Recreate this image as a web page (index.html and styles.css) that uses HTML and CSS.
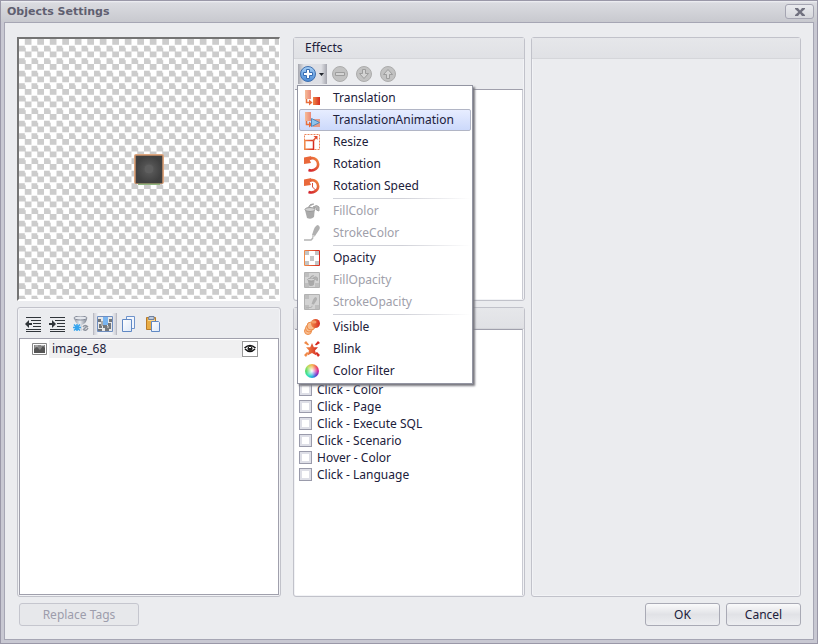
FILE: index.html
```html
<!DOCTYPE html>
<html lang="en">
<head>
<meta charset="utf-8">
<title>Objects Settings</title>
<link rel="stylesheet" href="styles.css">
</head>
<body>
<svg width="0" height="0" class="defs" aria-hidden="true">
  <defs>
    <linearGradient id="hot" x1="0" x2="1" y1="0" y2="0"><stop offset="0" stop-color="#f08a48"/><stop offset="1" stop-color="#d62a20"/></linearGradient>
    <linearGradient id="pale" x1="0" x2="1" y1="0" y2="0"><stop offset="0" stop-color="#f6bc98"/><stop offset="1" stop-color="#ea8878"/></linearGradient>
    <linearGradient id="spin" x1="0" x2="1" y1="1" y2="0"><stop offset="0" stop-color="#d2202c"/><stop offset="1" stop-color="#f28a40"/></linearGradient>
    <linearGradient id="blue" x1="0" x2="0" y1="0" y2="1"><stop offset="0" stop-color="#a8d0f6"/><stop offset="1" stop-color="#4a8ad6"/></linearGradient>
    <linearGradient id="page" x1="0" x2="1" y1="0" y2="1"><stop offset="0" stop-color="#fff"/><stop offset="1" stop-color="#dce8f8"/></linearGradient>
    <linearGradient id="steel" x1="0" x2="1" y1="0" y2="0"><stop offset="0" stop-color="#8d93a0"/><stop offset=".45" stop-color="#e8ebf0"/><stop offset="1" stop-color="#7c8390"/></linearGradient>
    <g id="move">
      <path d="M1 0h6v9H1z" fill="url(#pale)"/>
      <path d="M2.500 9v3.500H6" fill="none" stroke="#e8703c" stroke-width="1.500"/>
      <path d="M5 9.500l3.500 3-3.500 3z" fill="#e8683a"/>
    </g>
    <g id="turn">
      <path d="M5 3.200Q9 .8 12.200 3.700 15.500 7.500 13.200 11.500 10 15.600 4.500 14" fill="none" stroke="url(#spin)" stroke-width="2.600"/>
      <path d="M0 1.500L7.500 0 5.500 3.500 7 7 0 8z" fill="#e9683a"/>
    </g>
    <g id="bucket">
      <path d="M1 7l10-2-1 9q-3 3-7 1z" fill="#a9a9a9"/>
      <ellipse cx="6" cy="6.500" rx="5" ry="2" fill="#d2d2d2" stroke="#999"/>
      <path d="M4 5q2-5 6-4M9 4q4-3 6 0v4q-3 0-3-3z" fill="#b4b4b4" stroke="#a4a4a4"/>
    </g>
    <g id="pen">
      <path d="M14 0q3 2 1 5l-4 6-3-1 2-6q2-4 4-4z" fill="#b0b0b0"/>
      <path d="M8 10l3 1-3 3z" fill="#ccc"/><path d="M0 15h7l2-2" fill="none" stroke="#b4b4b4" stroke-width="1.500"/>
    </g>
  </defs>
</svg>
<div class="window">
  <header class="titlebar">
    <h1>Objects Settings</h1>
    <button class="close" aria-label="Close"><svg width="10" height="8" viewBox="0 0 10 8"><path d="M0 0h3l2 2.500L7 0h3v1L6.700 4 10 7v1H7L5 5.500 3 8H0V7l3.300-3L0 1z" fill="#71717f"/></svg></button>
  </header>
  <main class="content">
    <div class="columns">
      <div class="column">
        <div class="canvas">
          <svg width="30" height="31" viewBox="0 0 30 31">
            <defs><radialGradient id="tile"><stop offset="0" stop-color="#606060"/><stop offset="1" stop-color="#404040"/></radialGradient></defs>
            <rect width="30" height="30" rx="2" fill="#dda57d"/><path d="M4 30h22" stroke="#8fb57e" stroke-width="2"/>
            <rect x="1.500" y="1.500" width="27" height="28" fill="#7b5c49"/>
            <rect x="2" y="2" width="26" height="27" fill="url(#tile)"/><circle cx="15" cy="15" r="5" fill="#5f5f5f" stroke="#555"/>
          </svg>
        </div>
        <section class="panel grow">
          <div class="toolbar objects">
            <button aria-label="Outdent"><svg width="16" height="16" viewBox="0 0 16 16"><path d="M1 1.500h15M6 4.500h10M8 7.500h8M8 10.500h8M1 13.500h15M1 15.500h15" stroke="#30353a"/><path d="M0 8l4-4v3h3v2H4v3z" fill="#30353a"/></svg></button>
            <button aria-label="Indent"><svg width="16" height="16" viewBox="0 0 16 16"><path d="M1 1.500h15M6 4.500h10M8 7.500h8M8 10.500h8M1 13.500h15M1 15.500h15" stroke="#30353a"/><path d="M7 8L3 4v3H0v2h3v3z" fill="#30353a"/></svg></button>
            <button aria-label="Filter"><svg width="16" height="16" viewBox="0 0 16 16"><path d="M1 2q1 5 5 7v5l3 1V9q5-2 5-7z" fill="url(#steel)"/><ellipse cx="7.500" cy="2" rx="6.500" ry="2" fill="#e4e7ed" stroke="#858b98"/><path d="M4 8v7M0 11.500h8M1 8.500l6 6M7 8.500l-6 6" stroke="#35a4ee" stroke-width="1.500"/><path d="M10 14l4-4M10 11q2-3 5 0M15 12q-2 4-5 1" fill="none" stroke="#8f949e" stroke-width="1.500"/></svg></button>
            <button class="pressed" aria-label="Show background" aria-pressed="true"><svg width="16" height="16" viewBox="0 0 16 16"><path d="M.5.5h15v15H.5z" fill="#e8e8e8" stroke="#6f8ec0"/><path d="M1 3h3v3H1zM12 3h3v3h-3zM2 8h3v4H2zM6 9h4v3H6zM11 7h3v6h-3zM1 13h4v2H1zM8 12h4v3H8z" fill="#73777c"/><path d="M4 5h2v5H4zM10 10h2v2h-2z" fill="#aaa"/><path d="M6 1h5v8H6z" fill="#79b4f0"/></svg></button>
            <button aria-label="Copy"><svg width="16" height="16" viewBox="0 0 16 16"><path d="M5.500.5h8v12h-8z" fill="#f2f6fd" stroke="#6e93cb"/><path d="M1.500 3.500h9v12h-9z" fill="url(#page)" stroke="#6088c4"/></svg></button>
            <button aria-label="Paste"><svg width="16" height="16" viewBox="0 0 16 16"><path d="M1.500 1.500h9v12h-9z" fill="#e9ad45" stroke="#ba7b28"/><path d="M3 3h7v2H3z" fill="#f6d895"/><path d="M4 .5h5v3H3.500z" fill="#bdcbe0" stroke="#70819d"/><path d="M6.500 5.500h7l1 1v9h-8z" fill="url(#page)" stroke="#6088c4"/></svg></button>
          </div>
          <div class="list bordered">
            <div class="object-row">
              <svg width="15" height="12" viewBox="0 0 15 12"><path d="M.5.500h14v11H.5z" fill="#fff" stroke="#888"/><path d="M2 2h11v8H2z" fill="#878787"/><path d="M2 6l3-2 3 3 3-4 2 2v5H2z" fill="#555"/><path d="M3 3h3M9 2.500h3" stroke="#bcbcbc"/></svg>
              <span class="object-name">image_68</span>
              <button class="eye" aria-label="Toggle visibility"><svg width="12" height="9" viewBox="0 0 12 9"><path d="M.5 4Q6-1 11.500 4M1 5q5 5 10 0" fill="none" stroke="#111" stroke-width="1.500"/><circle cx="6" cy="4.500" r="2.500" fill="#222"/><path d="M5 3.500h2" stroke="#fff"/></svg></button>
            </div>
          </div>
        </section>
      </div>
      <div class="column middle">
        <section class="panel effects">
          <h2>Effects</h2>
          <div class="toolbar">
            <button class="add" aria-label="Add effect" aria-haspopup="menu" aria-expanded="true"><svg width="26" height="18" viewBox="0 0 26 18"><circle cx="9" cy="9" r="7.500" fill="url(#blue)" stroke="#4170ad"/><path d="M7.500 4.500h3v3h3v3h-3v3h-3v-3h-3v-3h3z" fill="#fff" stroke="#376cb0"/><path d="M20 8h5l-2.500 3z" fill="#20242c"/></svg></button>
            <button disabled aria-label="Remove effect"><svg width="16" height="16" viewBox="0 0 16 16"><circle cx="8" cy="8" r="7.500" fill="#c2c2c2" stroke="#acacac"/><path d="M3.500 6.500h9v3h-9z" fill="#d4d4d4" stroke="#9d9d9d"/></svg></button>
            <button disabled aria-label="Move down"><svg width="16" height="16" viewBox="0 0 16 16"><circle cx="8" cy="8" r="7.500" fill="#c2c2c2" stroke="#acacac"/><path d="M6.500 3.500h3v4h3L8 12.500 3.500 7.500h3z" fill="#d4d4d4" stroke="#9d9d9d"/></svg></button>
            <button disabled aria-label="Move up"><svg width="16" height="16" viewBox="0 0 16 16"><circle cx="8" cy="8" r="7.500" fill="#c2c2c2" stroke="#acacac"/><path d="M6.500 12.500h3v-4h3L8 3.500 3.500 8.500h3z" fill="#d4d4d4" stroke="#9d9d9d"/></svg></button>
          </div>
          <div class="list"></div>
          <div class="menu" role="menu">
            <button role="menuitem"><svg width="16" height="16" viewBox="0 0 16 16"><use href="#move"/><path d="M9 7h7v8H9z" fill="url(#hot)"/></svg>Translation</button>
            <button role="menuitem" class="active"><svg width="16" height="16" viewBox="0 0 16 16"><use href="#move"/><path d="M9 7h7v8H9z" fill="#e69a86"/><path d="M7.500 6.500l8 4-8 4z" fill="#8fc4ec" stroke="#4f88bd"/></svg>TranslationAnimation</button>
            <button role="menuitem"><svg width="16" height="16" viewBox="0 0 16 16"><path d="M.5.500h15v15H.5z" fill="none" stroke="#eb8358" stroke-dasharray="2 1"/><path d="M.8 6.500h8.700v8.700H.8z" fill="#fff" stroke="url(#hot)" stroke-width="1.500"/><path d="M9 7l3-3.500" stroke="#e25a34" stroke-width="1.500"/><path d="M9.500 2h4v4z" fill="#e0482e"/></svg>Resize</button>
            <button role="menuitem"><svg width="16" height="16" viewBox="0 0 16 16"><use href="#turn"/></svg>Rotation</button>
            <button role="menuitem"><svg width="16" height="16" viewBox="0 0 16 16"><use href="#turn"/><path d="M8.500 5v4l3 3" fill="none" stroke="#d85040"/></svg>Rotation Speed</button>
            <hr>
            <button role="menuitem" disabled><svg width="16" height="16" viewBox="0 0 16 16"><use href="#bucket"/></svg>FillColor</button>
            <button role="menuitem" disabled><svg width="16" height="16" viewBox="0 0 16 16"><use href="#pen"/></svg>StrokeColor</button>
            <hr>
            <button role="menuitem"><svg width="16" height="16" viewBox="0 0 16 16"><path d="M.5.500h15v15H.5z" fill="#fff" stroke="url(#hot)"/><path d="M1 1h4v4H1zM11 1h4v4h-4zM6 6h4v5H6zM1 11h4v4H1zM11 11h4v4h-4z" fill="#c4c4c4"/></svg>Opacity</button>
            <button role="menuitem" disabled><svg width="16" height="16" viewBox="0 0 16 16"><path d="M.5.500h15v15H.5z" fill="#d3d3d3" stroke="#b2b2b2"/><path d="M1 1h4v4H1zM11 11h4v4h-4zM1 11h4v4H1z" fill="#bebebe"/><use href="#bucket" transform="translate(3 3) scale(.7)"/></svg>FillOpacity</button>
            <button role="menuitem" disabled><svg width="16" height="16" viewBox="0 0 16 16"><path d="M.5.500h15v15H.5z" fill="#d3d3d3" stroke="#b2b2b2"/><path d="M1 1h4v4H1zM11 11h4v4h-4zM1 11h4v4H1z" fill="#bebebe"/><use href="#pen" transform="translate(2 3) scale(.7)"/></svg>StrokeOpacity</button>
            <hr>
            <button role="menuitem"><svg width="16" height="16" viewBox="0 0 16 16"><g fill="#f8bd90" stroke="#ed8e4b"><circle cx="4" cy="12" r="3.500"/><circle cx="5" cy="9.500" r="3.500"/><circle cx="7" cy="7" r="4"/></g><circle cx="11.500" cy="4.500" r="4.500" fill="url(#hot)"/><ellipse cx="10" cy="3" rx="2.500" ry="1.500" fill="#f59b66"/></svg>Visible</button>
            <button role="menuitem"><svg width="16" height="16" viewBox="0 0 16 16"><path d="M8 2l1.800 4.200H14l-3 3.300 1.500 5L8 12l-4.500 2.500 1.500-5-3-3.300h4.200z" fill="url(#hot)"/><path d="M0 2l2-2 3 3.500L4 4.500zM0 14l3-3 1.500 1-2.500 4z" fill="#f08a48"/><path d="M14 0l2 2-4 2.500-1-1zM14 16l2-2-3-3-1.500 1z" fill="#d62a20"/></svg>Blink</button>
            <button role="menuitem"><span class="wheel"></span>Color Filter</button>
          </div>
        </section>
        <section class="panel grow">
          <h2></h2>
          <div class="list events">
            <label><input type="checkbox">Click - Color</label>
            <label><input type="checkbox">Click - Page</label>
            <label><input type="checkbox">Click - Execute SQL</label>
            <label><input type="checkbox">Click - Scenario</label>
            <label><input type="checkbox">Hover - Color</label>
            <label><input type="checkbox">Click - Language</label>
          </div>
        </section>
      </div>
      <section class="panel properties"><h2></h2></section>
    </div>
    <footer>
      <button class="btn wide" disabled>Replace Tags</button>
      <button class="btn">OK</button>
      <button class="btn">Cancel</button>
    </footer>
  </main>
</div>
</body>
</html>
```
FILE: styles.css
```css
* { box-sizing: border-box; }
body { margin: 0; font: 12px/16px "Noto Sans", sans-serif; color: #20203a; }
button { font: inherit; color: inherit; border: 0; padding: 0; background: none; }
svg { display: block; flex: none; }
.defs { position: absolute; }
.window { min-height: 100vh; display: flex; flex-direction: column; padding: 0 3px 3px; border: 1px solid #9a98a8; background: #c8c8d2; }
.titlebar { height: 21px; margin: 0 -3px; padding: 0 3px; display: flex; justify-content: space-between; align-items: center; background: linear-gradient(#f1f1f5 0, #dadbe0 2px, #c8c9cf); }
h1 { margin: 0; padding-left: 3px; font: bold 11px/16px "DejaVu Sans", sans-serif; color: #5f5f70; }
.close { width: 29px; height: 15px; display: grid; place-items: center; border: 1px solid #a5a5b2; border-radius: 3px; background: linear-gradient(#e9eaee, #d6d7dc); }
.content { flex: 1; display: flex; flex-direction: column; padding: 14px 12px 13px; border: 1px solid #a6a6b4; background: #ebecef; }
.columns { flex: 1; display: grid; grid-template-columns: 264px 232px 1fr; }
.column { display: flex; flex-direction: column; gap: 6px; }
.middle { margin-left: 12px; margin-right: -12px; }
.properties { margin-left: 18px; }
.canvas { height: 264px; margin-right: 1px; display: grid; place-items: center; border: 2px solid; border-color: #747474 #fff #fff #747474; border-right-width: 1px; background: repeating-conic-gradient(#ccc 0 25%, #fff 0 50%) 0 0 / 12.500px 12.500px; }
.panel { position: relative; display: flex; flex-direction: column; border: 1px solid #c1c2ca; border-radius: 3px; padding: 0 1px 1px; box-shadow: inset 0 0 0 1px #f2f3f6; }
.grow { flex: 1; }
.effects { height: 264px; }
h2 { height: 21px; margin: 0 -1px; padding: 2px 11px; font-weight: normal; font-size: 12px; line-height: 16px; border-bottom: 1px solid #d5d6da; background: linear-gradient(#e6e7ea, #e0e1e5); }
.toolbar { height: 30px; padding: 4px 3px; display: flex; align-items: center; gap: 8px; }
.objects { padding: 6px 6px 4px; }
.pressed { height: 22px; padding: 0 3px; margin: 0 -4px; display: grid; place-items: center; border: solid #b9bac3; border-width: 0 1px; background: linear-gradient(90deg, #cfd0d7, #f1f2f5 20% 80%, #cfd0d7); }
.add { width: 29px; height: 20px; margin-right: -3px; padding: 0 1px; background: linear-gradient(90deg, #a6a7af, #dedfe4 20% 80%, #a6a7af); }
.list { flex: 1; background: #fff; border-top: 1px solid #a0a0ac; border-right: 1px solid #c9cad2; }
.bordered { border: 1px solid #a0a0ac; }
.object-row { display: flex; align-items: center; padding: 1px 20px 0 12px; height: 18px; }
.object-name { flex: 1; margin-left: 2px; padding-left: 3px; line-height: 18px; background: #f0f0f1; }
.eye { width: 16px; height: 16px; display: grid; place-items: center; border: 1px solid #999; background: #fff; }
.menu { position: absolute; z-index: 2; top: 47px; left: 3px; width: 176px; padding: 1px; border: 1px solid #9395a2; background: #fff; box-shadow: 2px 2px 2px #77777f; }
.menu button { width: 100%; height: 22px; display: flex; align-items: center; gap: 13px; padding: 0 4px; border: 1px solid transparent; border-radius: 2px; text-align: left; }
.menu button:disabled { color: #a0a0aa; }
.menu .active { border-color: #b1b5c5; background: linear-gradient(#e7edff, #ccd9fb); }
.menu hr { height: 1px; margin: 1px 0 1px 34px; border: 0; background: linear-gradient(90deg, #d0d1d8, #d0d1d8 50%, #fff); }
.wheel { flex: none; width: 14px; height: 14px; margin: 0 1px; border-radius: 50%; background: radial-gradient(circle, #fff, #fff0 60%), conic-gradient(#f4b850, #ee5858, #d3269c, #603ed2, #20b4dd, #35e4b0, #50da68, #b8dd60, #f4b850); }
.events { padding: 51px 4px 0; }
.events label { display: flex; align-items: center; gap: 5px; height: 17px; }
.events input { appearance: none; width: 13px; height: 13px; margin: 0; border: 1px solid #9a9bab; background: #fff; box-shadow: inset 0 0 0 2px #dedfe7; }
footer { display: flex; gap: 6px; padding: 6px 0 0 2px; }
.btn { width: 75px; height: 23px; border: 1px solid #a9aab5; border-radius: 3px; background: linear-gradient(#fafafb, #e1e2e6 50%, #edeef1); }
.wide { width: 120px; margin-right: auto; }
.btn:disabled { color: #9d9dac; border-color: #c5c6ce; background: #e7e8eb; }
```
